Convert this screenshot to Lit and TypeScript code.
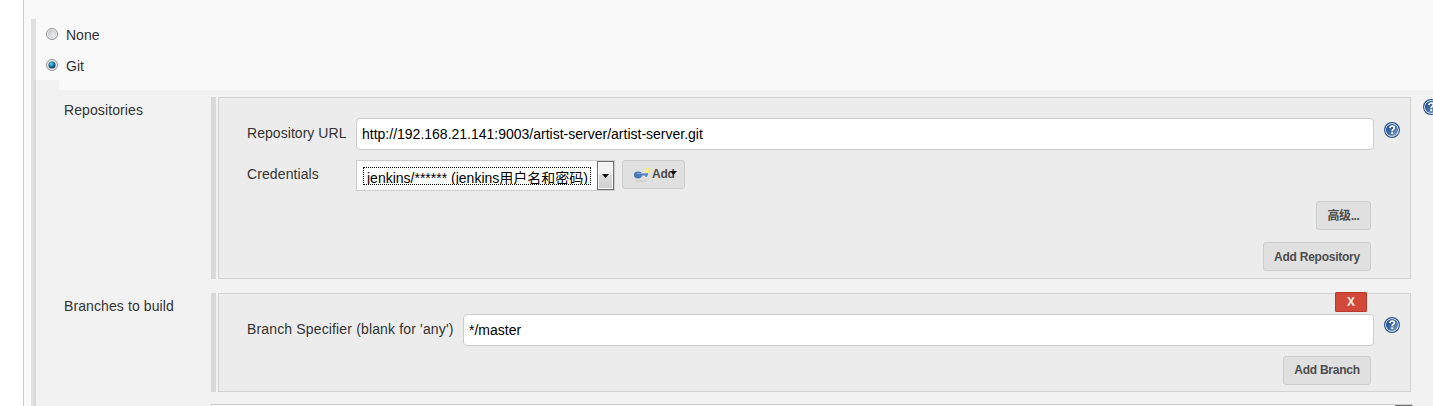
import { LitElement, html, css, svg } from "lit";
import { customElement, property } from "lit/decorators.js";

@customElement("help-icon")
class HelpIcon extends LitElement {
  static styles = css`
    :host { display: block; flex: none; width: 16px; height: 16px; }
    svg { display: block; }
  `;
  render() {
    return html`<svg width="16" height="16" viewBox="0 0 16 16">
      <defs>
        <linearGradient id="g" x1="0" y1="0" x2="1" y2="1">
          <stop offset="0" stop-color="#1f4b8c" />
          <stop offset="0.45" stop-color="#3c669f" />
          <stop offset="1" stop-color="#86a9d2" />
        </linearGradient>
      </defs>
      <circle cx="8" cy="8" r="7.4" fill="#fff" stroke="#2c5590" stroke-width="1.2" />
      <circle cx="8" cy="8" r="6.1" fill="url(#g)" />
      <path d="M5.9 6.1C6 4.5 7 4 8.2 4C9.6 4 10.3 4.8 10.3 5.8C10.3 7.4 8.2 7.4 8.1 9.2" fill="none" stroke="#fff" stroke-width="1.7" />
      <rect x="7.2" y="10.3" width="1.9" height="1.8" fill="#fff" />
    </svg>`;
  }
}

@customElement("radio-row")
class RadioRow extends LitElement {
  @property() label = "";
  @property({ type: Boolean }) checked = false;
  static styles = css`
    :host { display: flex; align-items: center; height: 31px; }
    svg { display: block; flex: none; margin: -2px 8px 0 0; }
    span { font-size: 14px; line-height: 18px; }
  `;
  render() {
    return html`<svg width="12" height="12" viewBox="0 0 12 12">
        <defs>
          <linearGradient id="r" x1="0" y1="0" x2="1" y2="1">
            <stop offset="0" stop-color="#bfc3c8" /><stop offset="1" stop-color="#f8f8f8" />
          </linearGradient>
          <radialGradient id="d" cx="0.4" cy="0.35" r="0.65">
            <stop offset="0" stop-color="#6fd0f5" /><stop offset="0.5" stop-color="#1d81b5" /><stop offset="1" stop-color="#10334f" />
          </radialGradient>
        </defs>
        <circle cx="6" cy="6" r="5.5" fill="#f6f6f6" stroke="#8b8d8f" />
        <circle cx="6" cy="6" r="3.9" fill="url(#r)" stroke="#c4c6c9" stroke-width="0.6" />
        ${this.checked ? svg`<circle cx="6" cy="6" r="3.5" fill="url(#d)" />` : ""}
      </svg><span>${this.label}</span>`;
  }
}

@customElement("app-root")
class AppRoot extends LitElement {
  static styles = css`
    * { box-sizing: border-box; }
    :host {
      display: flex; width: 100%; height: 406px; overflow: hidden; background: #fff;
      padding-left: 23px; color: #333;
      font: 14px/18px "Liberation Sans", Arial, "Noto Sans CJK SC", sans-serif;
    }
    .page { flex: 1; min-width: 0; display: flex; border-left: 1px solid #ccc; background: #f9f9f9; padding: 19px 0 0 7px; }
    .rail { flex: none; width: 5px; display: flex; flex-direction: column; background: #e0e0e0; }
    .rail::after { content: ""; margin: 61px 0 0 3px; flex: 1; background: #d9d9d9; }
    .main { flex: 1; min-width: 0; display: flex; flex-direction: column; }
    .radios { height: 61px; padding-left: 10px; flex: none; }
    .tab { flex: none; width: 23px; height: 10px; background: #f2f2f2; }
    .scm { flex: 1; background: #f2f2f2; padding: 7px 0 0 28px; }
    .row { display: flex; align-items: flex-start; margin-bottom: 14px; }
    .name { flex: none; width: 147px; padding-top: 4px; letter-spacing: 0.1px; }
    .chunk { flex: none; width: 1200px; display: flex; gap: 2px; }
    .bar { width: 5px; background: #d9d9d9; }
    .panel { flex: 1; background: #ececec; border: 1px solid #d3d3d3; padding: 20px 10px 0 28px; }
    .repo { height: 182px; }
    .branch { height: 99px; }
    .line { display: flex; height: 32px; }
    .line help-icon { margin: 4px 0 0 10px; }
    .branch help-icon { margin-top: 3px; }
    .outer { margin: 2px 0 0 12px; }
    .label { flex: none; width: 109px; padding-top: 6px; white-space: nowrap; letter-spacing: 0.05px; }
    .label.wide { width: 216px; letter-spacing: 0.15px; }
    .input { flex: 1; background: #fff; border: 1px solid #ccc; border-radius: 4px; padding: 6px 5px; color: #000; }
    .cred { margin-top: 10px; }
    .cred .label { padding-top: 5px; letter-spacing: 0.1px; }
    .select { width: 259px; height: 31px; background: #fff; border: 1px solid #ccc; display: flex; padding-left: 6px; justify-content: space-between; }
    .focus { width: 228px; height: 18px; margin-top: 6px; border: 1px dotted #000; overflow: hidden; white-space: nowrap; color: #000; padding: 0 0 0 3px; line-height: 21px; }
    .arrow { width: 17px; height: 29px; border: 1px solid #707070; background: linear-gradient(#f2f2f2 0 50%, #dcdcdc 50%, #cfcfcf); box-shadow: inset 0 0 0 1px #f7f7f7; display: flex; align-items: center; justify-content: center; }
    .btn { height: 29px; border: 1px solid #ccc; border-radius: 3px; background: #e0e0e0; color: #4d4d4d; font-size: 12px; font-weight: bold; line-height: 27px; text-align: center; white-space: nowrap; letter-spacing: -0.25px; }
    .add { width: 63px; margin-left: 7px; display: flex; padding-left: 10px; }
    .add svg { margin: 4px 2px 0 0; flex: none; }
    .add .caret { margin: 10px 0 0 -5px; }
    .actions { display: flex; flex-direction: column; align-items: flex-end; gap: 12px; padding-right: 29px; margin-top: 9px; }
    .adv { width: 55px; line-height: 29px; letter-spacing: -0.4px; }
    .addrepo { width: 108px; line-height: 29px; }
    .addbranch { width: 88px; }
    .branch .actions { margin-top: 10px; }
    .wrap { position: relative; }
    .del { position: absolute; right: 44px; top: -1px; width: 32px; height: 20px; background: #d24939; border: 1px solid #b93a2c; border-radius: 1px; color: #f4f0ee; font-size: 12px; font-weight: bold; line-height: 18px; text-align: center; }
    .browser { margin: -2px 0 0 147px; width: 1202px; height: 31px; border: 1px solid #ccc; background: #fff; display: flex; justify-content: flex-end; }
  `;

  render() {
    return html`<div class="page">
      <div class="rail"></div>
      <div class="main">
        <div class="radios">
          <radio-row label="None"></radio-row>
          <radio-row label="Git" checked></radio-row>
        </div>
        <div class="tab"></div>
        <div class="scm">
          <div class="row">
            <div class="name">Repositories</div>
            <div class="chunk">
              <div class="bar"></div>
              <div class="panel repo">
                <div class="line">
                  <div class="label">Repository URL</div>
                  <div class="input">http://192.168.21.141:9003/artist-server/artist-server.git</div>
                  <help-icon></help-icon>
                </div>
                <div class="line cred">
                  <div class="label">Credentials</div>
                  <div class="select">
                    <div class="focus">jenkins/****** (jenkins用户名和密码)</div>
                    <div class="arrow"><svg width="7" height="4"><path d="M0 0H7L3.5 4Z" fill="#000" /></svg></div>
                  </div>
                  <div class="btn add">
                    <svg width="17" height="17" viewBox="0 0 17 17">
                      <ellipse cx="8" cy="15.8" rx="6" ry="0.9" fill="#cdcdcd" />
                      <rect x="12.4" y="3" width="4.6" height="4.6" rx="1.6" fill="#f2e94e" opacity="0.85" />
                      <path d="M7 8H15V10.6H13.8V12H12.4V10.6H7Z" fill="#5582bb" />
                      <ellipse cx="5" cy="10" rx="4.1" ry="3.4" fill="#4a79b6" />
                      <path d="M4 8.5H14.6" stroke="#86abd9" />
                      <path d="M14.7 3.4V7.2M12.8 5.3H16.6" stroke="#fffb7c" />
                    </svg>
                    <span>Add</span>
                    <svg class="caret" width="7" height="4"><path d="M0 0H7L3.5 4Z" fill="#111" /></svg>
                  </div>
                </div>
                <div class="actions">
                  <div class="btn adv">高级...</div>
                  <div class="btn addrepo">Add Repository</div>
                </div>
              </div>
            </div>
            <help-icon class="outer"></help-icon>
          </div>
          <div class="row">
            <div class="name">Branches to build</div>
            <div class="chunk wrap">
              <div class="bar"></div>
              <div class="panel branch">
                <div class="line">
                  <div class="label wide">Branch Specifier (blank for 'any')</div>
                  <div class="input">*/master</div>
                  <help-icon></help-icon>
                </div>
                <div class="actions"><div class="btn addbranch">Add Branch</div></div>
              </div>
              <div class="del">X</div>
            </div>
          </div>
          <div class="browser"><div class="arrow"></div></div>
        </div>
      </div>
    </div>`;
  }
}
